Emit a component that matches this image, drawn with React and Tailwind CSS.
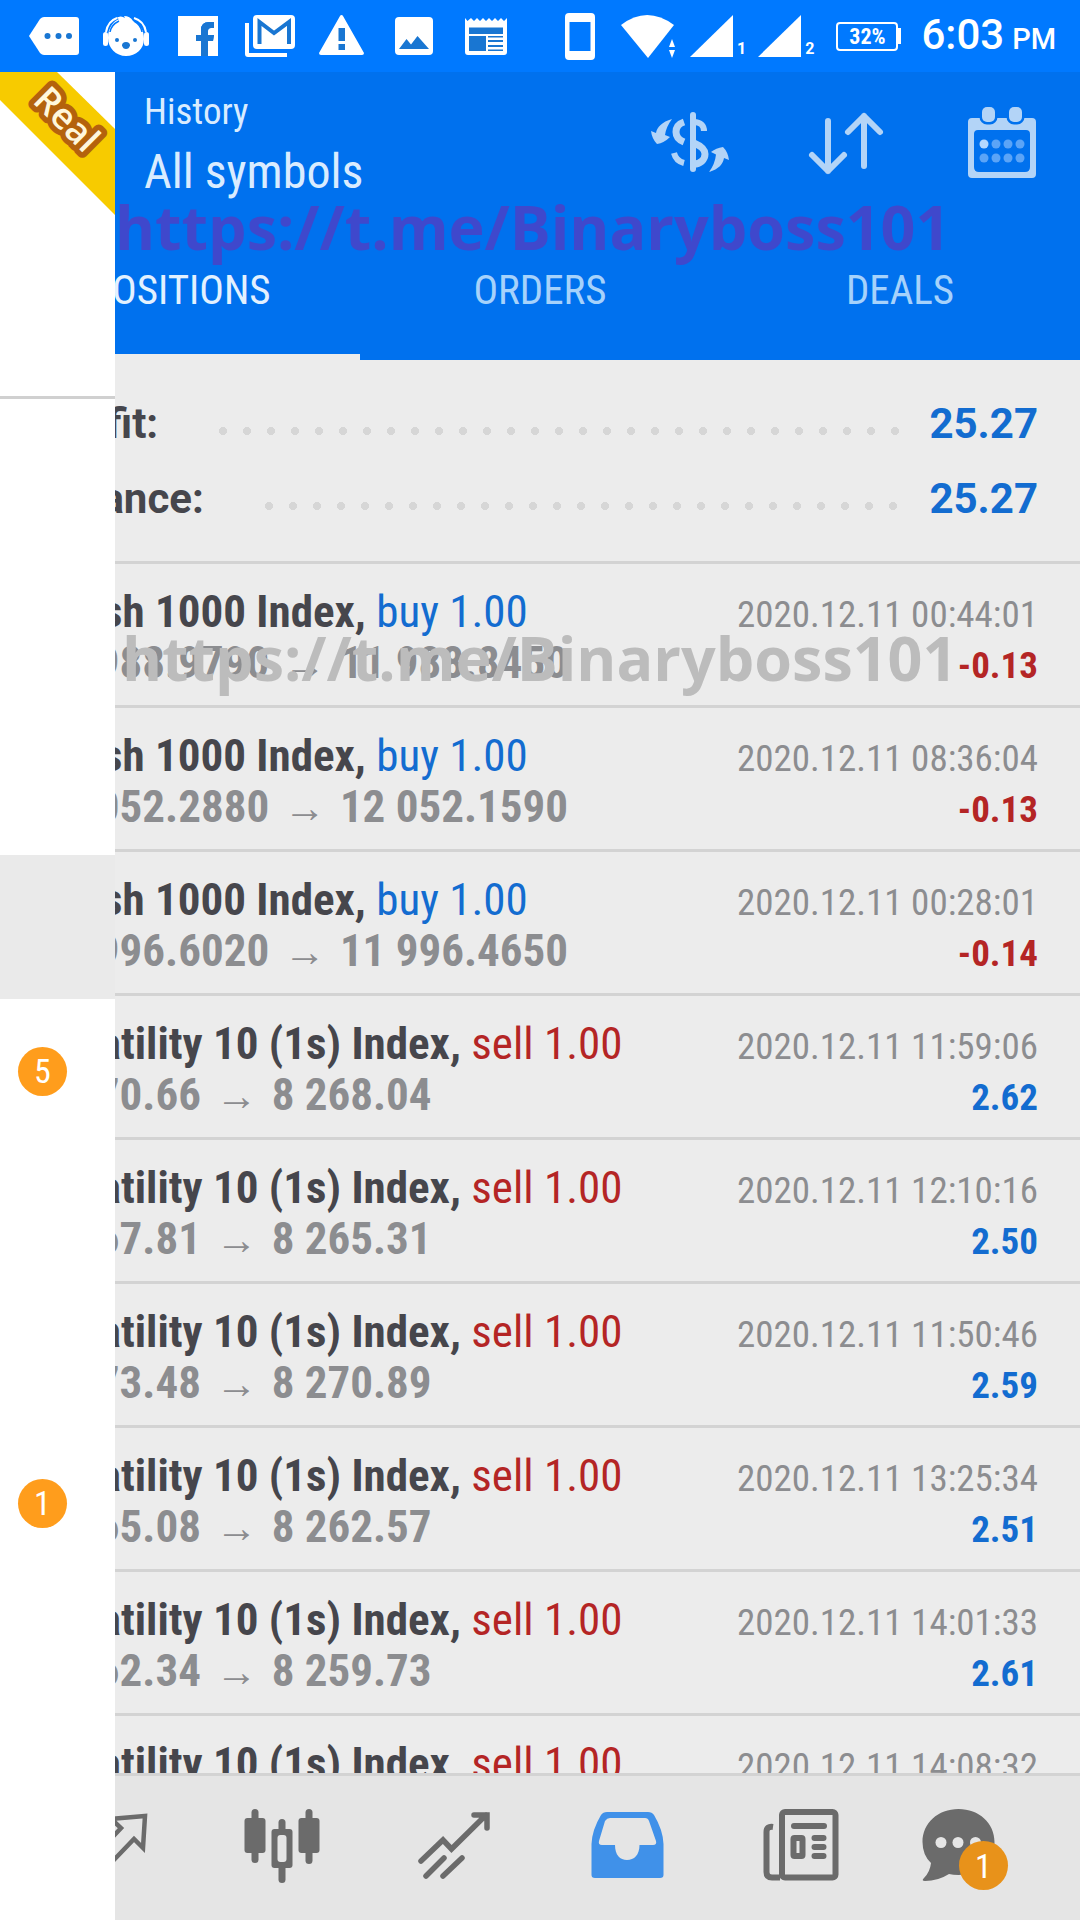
const COND = "font-['Roboto_Condensed','Roboto',sans-serif]";

const DEALS = [
  { symbol: "Crash 1000 Index", side: "buy", open: "11 988.9790", close: "11 988.8450", time: "2020.12.11 00:44:01", profit: "-0.13" },
  { symbol: "Crash 1000 Index", side: "buy", open: "12 052.2880", close: "12 052.1590", time: "2020.12.11 08:36:04", profit: "-0.13" },
  { symbol: "Crash 1000 Index", side: "buy", open: "11 996.6020", close: "11 996.4650", time: "2020.12.11 00:28:01", profit: "-0.14" },
  { symbol: "Volatility 10 (1s) Index", side: "sell", open: "8 270.66", close: "8 268.04", time: "2020.12.11 11:59:06", profit: "2.62" },
  { symbol: "Volatility 10 (1s) Index", side: "sell", open: "8 267.81", close: "8 265.31", time: "2020.12.11 12:10:16", profit: "2.50" },
  { symbol: "Volatility 10 (1s) Index", side: "sell", open: "8 273.48", close: "8 270.89", time: "2020.12.11 11:50:46", profit: "2.59" },
  { symbol: "Volatility 10 (1s) Index", side: "sell", open: "8 265.08", close: "8 262.57", time: "2020.12.11 13:25:34", profit: "2.51" },
  { symbol: "Volatility 10 (1s) Index", side: "sell", open: "8 262.34", close: "8 259.73", time: "2020.12.11 14:01:33", profit: "2.61" },
  { symbol: "Volatility 10 (1s) Index", side: "sell", open: "8 260.12", close: "8 257.60", time: "2020.12.11 14:08:32", profit: "2.52" },
];

const SUMMARY = [
  { label: "Profit:", value: "25.27" },
  { label: "Balance:", value: "25.27" },
];

const DRAWER_ITEMS = [
  { name: "Trade" },
  { name: "News" },
  { name: "Mailbox" },
  { name: "Journal", active: true },
  { name: "Chat", count: 5 },
  { name: "Calendar" },
  { name: "Community" },
  { name: "Messages", count: 1 },
  { name: "Settings" },
];

function StatusIcon({ children }) {
  return (
    <svg viewBox="0 0 48 48" className="size-12 shrink-0 overflow-visible" fill="#fff" aria-hidden="true">
      {children}
    </svg>
  );
}

function Signal({ sim }) {
  return (
    <div className="flex items-end gap-1">
      <svg viewBox="0 0 43 42" className="h-[42px] w-[43px]" fill="#fff" aria-hidden="true">
        <path d="M0 42 43 0V42Z" />
      </svg>
      <span className="text-base leading-4 font-bold">{sim}</span>
    </div>
  );
}

function StatusBar() {
  return (
    <div className="flex h-[72px] shrink-0 items-center justify-between bg-[#0079ff] pr-6 pl-[30px] text-white">
      <div className="flex gap-6">
        <StatusIcon>
          <path d="M-1 24 10 7Q12 5 14 5H46Q49 5 49 8V40Q49 43 46 43H14Q12 43 10 41Z" />
          <g fill="#1976d2">
            <circle cx="17.5" cy="24" r="3" />
            <circle cx="28.5" cy="24" r="3" />
            <circle cx="39" cy="24" r="3" />
          </g>
        </StatusIcon>
        <StatusIcon>
          <path d="M6 26C6 15 12 9 17 7L14 6Q19 3 23 6L22 4Q28 4 31 9C38 12 42 18 42 27 42 37 34 44 24 44S6 36 6 26Z" />
          <rect x="1" y="20" width="5" height="14" rx="2.5" />
          <rect x="42" y="20" width="5" height="14" rx="2.5" />
          <path d="M4 20Q6 9 15 6M44 20Q42 9 32 6" fill="none" stroke="#fff" strokeWidth="2" />
          <path d="M8 20Q9 13 17 9M40 20Q39 13 32 9" fill="none" stroke="#0079ff" strokeWidth="1.5" />
          <g fill="#1976d2">
            <circle cx="15" cy="28" r="2" />
            <circle cx="33" cy="28" r="2" />
            <path d="M24 30Q28 30 28 33.500 27 37 24 37 21 37 20 33.500 20 30 24 30Z" />
          </g>
        </StatusIcon>
        <StatusIcon>
          <path d="M4 4H44V44H34V29H39L40 23H34V19Q34 16 37 16H40V10H35Q27 10 27 18V23H22V29H27V44H4Z" />
          <path d="M27 44V29H22V23H27V18Q27 10 35 10H40V16H37Q34 16 34 19V23H40L39 29H34V44Z" fill="#1976d2" />
        </StatusIcon>
        <StatusIcon>
          <path d="M-1 11H3V41H41V45H2Q-1 45-1 42Z" />
          <rect x="7" y="3" width="42" height="34" rx="4" />
          <path d="M13.500 32V10L28 21 43 10V32" fill="none" stroke="#1976d2" strokeWidth="4" />
        </StatusIcon>
        <StatusIcon>
          <path d="M23.500 3Q24.500 3 25 4L46 41Q46 43 44 43H3Q1 43 1 41L22 4Q22.500 3 23.500 3Z" />
          <path d="M20.500 16H27V29H20.500ZM20.500 32H27V38H20.500Z" fill="#1976d2" />
        </StatusIcon>
        <StatusIcon>
          <rect x="5" y="5" width="38" height="38" rx="4" />
          <path d="M9 37 16.500 27 21 32.500 27.500 24 39 37Z" fill="#1976d2" />
        </StatusIcon>
        <StatusIcon>
          <path d="M3 6 5.500 9 9 6 12 9 15 6 18 9 21 6 24 9 27 6 30 9 33 6 36 9 39 6 42 9 45 6V40Q45 43 42 43H6Q3 43 3 40Z" />
          <path d="M7 15.500H41V22H7ZM7 24H24V39H7ZM26 24H41V25.500H26ZM26 28H41V30H26ZM26 33H41V35H26ZM26 37.500H41V39H26Z" fill="#1976d2" />
        </StatusIcon>
      </div>
      <div className="flex items-center font-['Roboto',sans-serif]">
        <svg viewBox="0 0 30 48" className="mr-[26px] h-12 w-[30px]" fill="#fff" aria-hidden="true">
          <path fillRule="evenodd" d="M4 1H26Q30 1 30 5V44Q30 48 26 48H4Q0 48 0 44V5Q0 1 4 1ZM4.500 10V39H25.500V10Z" />
        </svg>
        <svg viewBox="0 0 55 43" className="mr-[14px] h-[43px] w-[55px]" fill="#fff" aria-hidden="true">
          <path d="M0 10Q26-10 53 10L27 43Z" />
          <path d="M47 30H58V43H47Z" fill="#0079ff" />
          <path d="M51 24 54 32H48ZM48 35H54L51 43Z" />
        </svg>
        <div className="mr-3"><Signal sim="1" /></div>
        <div className="mr-[22px]"><Signal sim="2" /></div>
        <div className="flex items-center">
          <div className={`flex h-[29px] w-[62px] items-center justify-center rounded-sm border-2 border-white text-[22px] font-bold ${COND}`}>32%</div>
          <div className="h-4 w-[3px] bg-white" />
        </div>
        <div className="ml-5 flex items-baseline gap-2 font-medium">
          <span className="text-[42px] leading-[48px]">6:03</span>
          <span className="text-[29px]">PM</span>
        </div>
      </div>
    </div>
  );
}

function ActionButton({ label, children }) {
  return (
    <button type="button" aria-label={label} className="size-[84px]">
      <svg viewBox="0 0 84 84" className="size-full" fill="none" stroke="#b3d4f7" strokeWidth="6" strokeLinecap="round" strokeLinejoin="round">
        {children}
      </svg>
    </button>
  );
}

function Header() {
  return (
    <header className={`bg-[#0071ee] text-[#d9ecff] ${COND}`}>
      <div className="flex h-[136px] items-start justify-between pt-7 pr-9 pl-36">
        <div>
          <p className="-mt-3 text-[37px] leading-[48px]">History</p>
          <h1 className="text-[48px] leading-[72px]">All symbols</h1>
        </div>
        <div className="flex gap-[72px]">
          <ActionButton label="Currency">
            <g stroke="none" fill="#b3d4f7">
              <path d="M24 19C14 22 9 27 8 33L3 31Q4 39 9 44 16 43 22 37L17 35Q18 27 24 19Z" />
              <path d="M61 72C71 69 75 64 76 58L81 60Q80 52 75 47 68 48 63 52L68 54.500Q67 64 61 72Z" />
            </g>
            <path d="M45 15V69" />
            <g strokeLinecap="butt">
              <path d="M36 22C30 24 28 28 28 32 28 37 31 40 36 42" strokeWidth="7" />
              <path d="M46 22C53 22 56 26 56 31" />
              <path d="M46 43C53 46 57 49 57 54 57 60 52 64 46 64" strokeWidth="7" />
              <path d="M26 53Q28 61 36 63" />
            </g>
          </ActionButton>
          <ActionButton label="Sort">
            <path d="M24 21V71M8 55 24 71 40 55M60 66V16M44 32 60 16 76 32" />
          </ActionButton>
          <ActionButton label="Period">
            <g stroke="none" fill="#b3d4f7">
              <path fillRule="evenodd" d="M12 18H72Q76 18 76 22V74Q76 78 72 78H12Q8 78 8 74V22Q8 18 12 18ZM18 30Q14 30 14 34V67Q14 72 19 72H65Q70 72 70 67V34Q70 30 66 30Z" />
              <rect x="22" y="7" width="13" height="15" rx="5" stroke="#0071ee" strokeWidth="5" paintOrder="stroke" />
              <rect x="49" y="7" width="13" height="15" rx="5" stroke="#0071ee" strokeWidth="5" paintOrder="stroke" />
            </g>
            <g stroke="none" fill="#5ba4f7">
              <circle cx="24" cy="44" r="4.500" fill="#b3d8ff" />
              <circle cx="36" cy="44" r="4.500" />
              <circle cx="48" cy="44" r="4.500" />
              <circle cx="60" cy="44" r="4.500" />
              <circle cx="24" cy="58" r="4.500" />
              <circle cx="36" cy="58" r="4.500" />
              <circle cx="48" cy="58" r="4.500" />
              <circle cx="60" cy="58" r="4.500" />
            </g>
          </ActionButton>
        </div>
      </div>
      <nav className="grid h-[152px] grid-cols-3 text-[41px] leading-[48px]">
        <button type="button" className="border-b-[6px] border-[#ececec] pt-[18px] text-[#e3f1ff]">POSITIONS</button>
        <button type="button" className="border-b-[6px] border-transparent pt-[18px] text-[#a6d2fb]">ORDERS</button>
        <button type="button" className="border-b-[6px] border-transparent pt-[18px] text-[#a6d2fb]">DEALS</button>
      </nav>
    </header>
  );
}

function SummaryRow({ label, value }) {
  return (
    <div className="flex h-[75px] items-center text-[42px] font-bold">
      <dt className="text-[#46464c]">{label}</dt>
      <span className="mt-[14px] mr-6 ml-[53px] h-2 flex-1 bg-[radial-gradient(circle,#d6d6d6_4px,transparent_4px)] bg-[length:24px_8px]" />
      <dd className="text-[#136cd0]">{value}</dd>
    </div>
  );
}

function DealRow({ deal }) {
  const sideColor = deal.side === "buy" ? "text-[#136cd0]" : "text-[#b42525]";
  const profitColor = deal.profit.startsWith("-") ? "text-[#b42525]" : "text-[#136cd0]";
  return (
    <li className="h-36 shrink-0 border-b-[3px] border-[#d3d3d3] pt-[22px] pr-[42px] pl-[41px] leading-[51px] whitespace-nowrap">
      <div className="flex items-baseline justify-between">
        <span className="text-[45px] font-bold text-[#46464c]">
          {deal.symbol}, <span className={`font-normal ${sideColor}`}>{deal.side} 1.00</span>
        </span>
        <time className="text-[37px] leading-[45px] text-[#8c8d90]">{deal.time}</time>
      </div>
      <div className="flex items-baseline justify-between">
        <span className="text-[45px] font-bold text-[#8c8d90]">
          {deal.open} <span className="px-1 font-['Liberation_Sans',sans-serif] text-[42px] leading-none">→</span> {deal.close}
        </span>
        <span className={`text-[37px] leading-[45px] font-bold ${profitColor}`}>{deal.profit}</span>
      </div>
    </li>
  );
}

function Badge({ children, className }) {
  return (
    <span className={`flex size-[49px] items-center justify-center rounded-full text-[34px] leading-[48px] text-white ${COND} ${className}`}>
      {children}
    </span>
  );
}

function Drawer() {
  return (
    <aside className="absolute inset-y-0 left-0 w-[115px] overflow-hidden bg-white">
      <div className="h-[327px] border-b-[3px] border-[#d0d0d0]">
        <svg viewBox="0 0 115 143" className="h-[143px] w-[115px]">
          <path d="M0 0H57L115 57V143L0 28Z" fill="#f7cb00" />
          <text
            x="65"
            y="59"
            transform="rotate(45 65 49)"
            textAnchor="middle"
            fill="#fff7dc"
            stroke="#b4620d"
            strokeWidth="11"
            strokeLinejoin="round"
            paintOrder="stroke"
            className="font-['Open_Sans',sans-serif] text-[36px] font-semibold"
          >
            Real
          </text>
        </svg>
      </div>
      <ul className="pt-6">
        {DRAWER_ITEMS.map((item) => (
          <li key={item.name}>
            <a href="#" aria-label={item.name} className={`flex h-36 items-center pl-[18px] ${item.active ? "bg-[#eaeaea]" : ""}`}>
              {item.count && <Badge className="bg-[#ff9d1c]">{item.count}</Badge>}
            </a>
          </li>
        ))}
      </ul>
    </aside>
  );
}

function TabButton({ label, children, badge }) {
  return (
    <button type="button" aria-label={label} className="relative flex flex-1 items-center justify-center">
      <svg viewBox="0 0 84 84" className="size-[84px] overflow-visible" fill="none" stroke="#6b6b6b" strokeWidth="6" strokeLinecap="round">
        {children}
      </svg>
      {badge && <Badge className="absolute top-[65px] right-[51px] bg-[#e8921a]">{badge}</Badge>}
    </button>
  );
}

function BottomNav() {
  return (
    <nav className="flex h-[147px] shrink-0 border-t-[3px] border-[#d3d3d3] bg-[#e5e5e5] px-[21px]">
      <TabButton label="Quotes">
        <path d="M44 13 79 10 77 42 68 33 44 58M40 8 55 22 40 38" strokeWidth="4.500" />
      </TabButton>
      <TabButton label="Charts">
        <g stroke="none" fill="#6b6b6b">
          <rect x="12.500" y="3" width="7" height="54" rx="3.500" />
          <rect x="5.500" y="12" width="21" height="35" rx="3" />
          <rect x="66.500" y="3" width="7" height="55" rx="3.500" />
          <rect x="59.500" y="12" width="21" height="35" rx="3" />
          <rect x="39.500" y="13" width="7" height="64" rx="3.500" />
          <rect x="32.500" y="23" width="21" height="39" rx="3" />
          <rect x="38.500" y="29" width="9" height="27" rx="3" fill="#e5e5e5" />
        </g>
      </TabButton>
      <TabButton label="Trade">
        <path d="M9 55 31 34 39.500 43 74 9M62 9H75V22M14 70 32 52M31 70 50 52" strokeWidth="5.500" />
      </TabButton>
      <TabButton label="History">
        <path
          fillRule="evenodd"
          stroke="none"
          fill="#4091e9"
          d="M22 6H63Q67 6 69 9 78 24 78.500 38V69Q78.500 72 75 72H10Q6.500 72 6.500 69V38Q7 24 16 9 18 6 22 6ZM25 12Q22 12 20 15L14 35Q13 39 17 39H30C30 49 35 54 42 54S54.500 49 54.500 39H68Q72 39 71 35L64 15Q63 12 60 12Z"
        />
      </TabButton>
      <TabButton label="News">
        <rect x="24" y="6" width="53.500" height="65.500" rx="3" />
        <path d="M15 21Q8.500 20 8.500 26V66Q8.500 71.500 14 71.500H22" strokeLinecap="butt" />
        <path d="M36 20H66" />
        <path d="M56.500 32H65.500M56.500 41H65.500M56.500 50H65.500" />
        <rect x="35.500" y="32" width="9" height="18" rx="1" />
      </TabButton>
      <TabButton label="Messages" badge="1">
        <path
          stroke="none"
          fill="#6b6b6b"
          d="M27.500 3C48 3 63.500 17 63.500 36S48 69 27.500 69Q22 69 18 68 7 75-6 75-10 75-7 72-1 66 0 57-8.500 49-8.500 36C-8.500 17 7 3 27.500 3Z"
        />
        <g stroke="none" fill="#e5e5e5">
          <circle cx="10" cy="36.500" r="5.500" />
          <circle cx="27" cy="36.500" r="5.500" />
          <circle cx="44.500" cy="36.500" r="5.500" />
        </g>
      </TabButton>
    </nav>
  );
}

export default function App() {
  return (
    <div className="flex h-screen flex-col overflow-hidden bg-[#ececec]">
      <StatusBar />
      <div className="relative flex min-h-0 flex-1 flex-col">
        <Header />
        <main className={`flex min-h-0 flex-1 flex-col overflow-hidden ${COND}`}>
          <dl className="shrink-0 border-b-[3px] border-[#d3d3d3] pt-[26px] pr-[42px] pb-[25px] pl-[41px] font-['Roboto',sans-serif]">
            {SUMMARY.map((row) => <SummaryRow key={row.label} {...row} />)}
          </dl>
          <ul className="flex flex-col">
            {DEALS.map((deal) => <DealRow key={deal.time} deal={deal} />)}
          </ul>
        </main>
        <BottomNav />
        <Drawer />

        {/* Channel link stamped over the screen */}
        <p className="pointer-events-none absolute top-[111px] left-[115px] font-['Open_Sans',sans-serif] text-[61px] leading-[88px] font-bold whitespace-nowrap text-[#3f48cc]">
          https://t.me/Binaryboss101
        </p>
        <p className="pointer-events-none absolute top-[542px] left-[122px] font-['Open_Sans',sans-serif] text-[61px] leading-[88px] font-bold whitespace-nowrap text-[#bcbcbc]">
          https://t.me/Binaryboss101
        </p>
      </div>
    </div>
  );
}
